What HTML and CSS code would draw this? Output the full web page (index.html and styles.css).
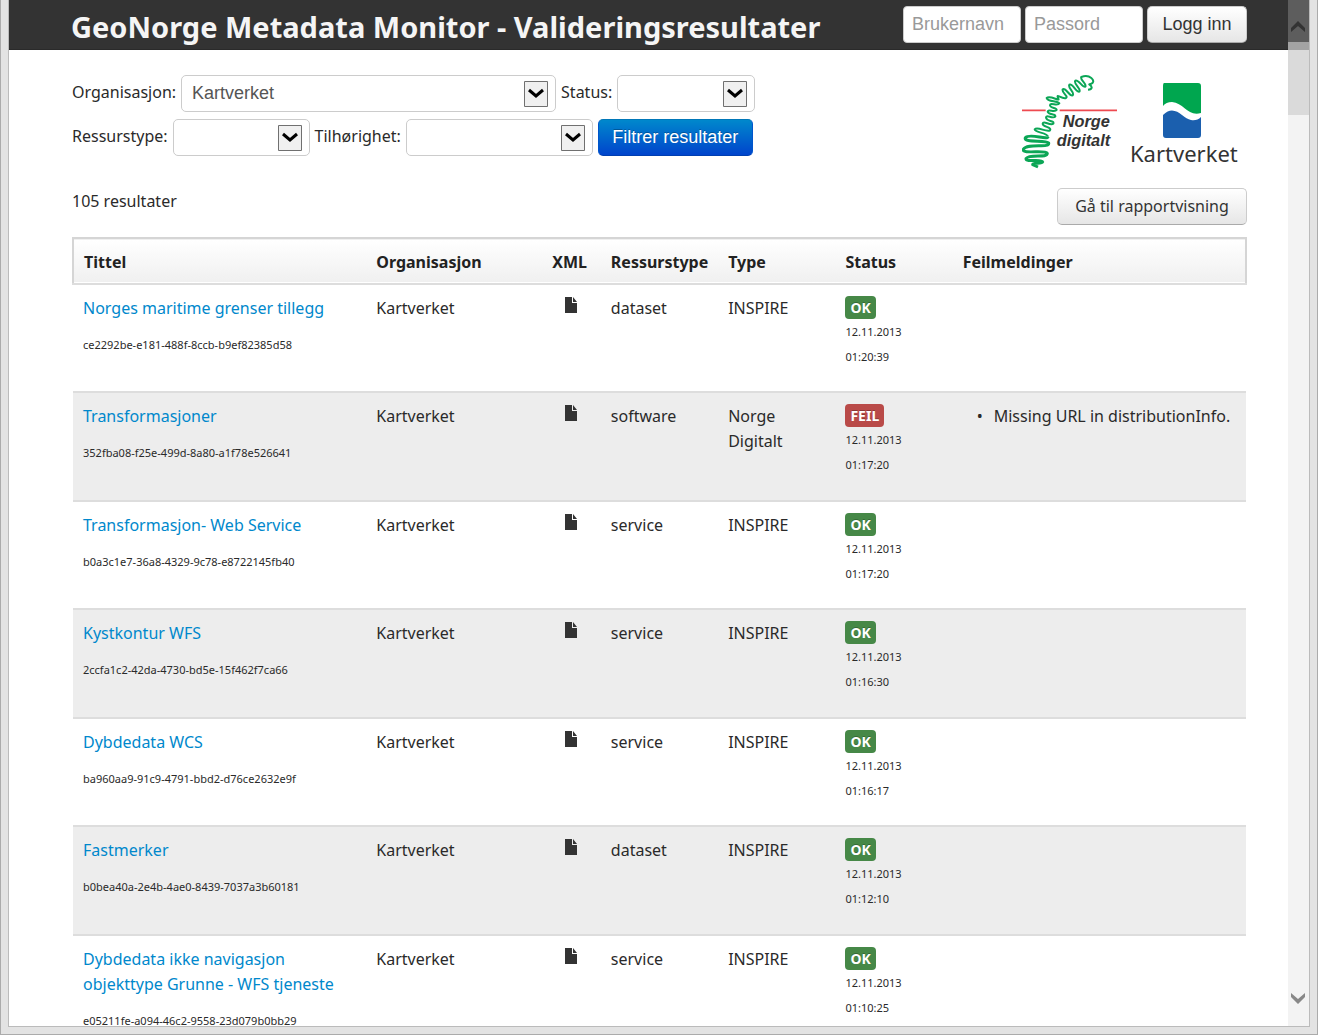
FILE: index.html
```html
<!DOCTYPE html>
<html lang="no">
<head>
<meta charset="utf-8">
<title>GeoNorge Metadata Monitor</title>
<link rel="stylesheet" href="styles.css">
</head>
<body>
<div class="window">
  <div class="page">
    <header class="navbar">
      <div class="navbar-inner">
        <h1 class="brand">GeoNorge Metadata Monitor - Valideringsresultater</h1>
        <form class="login">
          <input class="login-input" type="text" placeholder="Brukernavn" aria-label="Brukernavn">
          <input class="login-input" type="password" placeholder="Passord" aria-label="Passord">
          <button class="btn btn-login" type="button">Logg inn</button>
        </form>
      </div>
    </header>
    <main class="container">
      <div class="top">
        <form class="filters">
          <div class="filter-row">
            <label for="org">Organisasjon:</label>
            <span class="select select-org"><select id="org"><option>Kartverket</option></select><svg class="drop" viewBox="0 0 24 26"><path class="drop-box" d="M.5.500h23v25H.5z"/><path class="drop-arrow" d="M5 9l7 6 7-6"/></svg></span>
            <label for="status">Status:</label>
            <span class="select select-status"><select id="status"><option></option></select><svg class="drop" viewBox="0 0 24 26"><path class="drop-box" d="M.5.500h23v25H.5z"/><path class="drop-arrow" d="M5 9l7 6 7-6"/></svg></span>
          </div>
          <div class="filter-row">
            <label for="type">Ressurstype:</label>
            <span class="select select-type"><select id="type"><option></option></select><svg class="drop" viewBox="0 0 24 26"><path class="drop-box" d="M.5.500h23v25H.5z"/><path class="drop-arrow" d="M5 9l7 6 7-6"/></svg></span>
            <label for="belongs">Tilhørighet:</label>
            <span class="select select-belongs"><select id="belongs"><option></option></select><svg class="drop" viewBox="0 0 24 26"><path class="drop-box" d="M.5.500h23v25H.5z"/><path class="drop-arrow" d="M5 9l7 6 7-6"/></svg></span>
            <button class="btn btn-primary" type="button">Filtrer resultater</button>
          </div>
        </form>
        <div class="logos">
          <svg class="logo-norge" viewBox="0 0 288 288" role="img" aria-label="Norge digitalt">
            <path class="red-line" d="M0 109h71M113 109h172"/>
            <path class="coast thin" d="M198 47C212 46 212 38 202 31C214 30 218 20 208 12C198 4 186 6 178 9C172 16 196 30 190 38C182 42 170 16 160 20C152 28 180 46 172 53C162 56 152 26 142 32C136 42 160 56 152 64C142 68 132 40 122 46C118 56 140 66 132 72C118 76 102 56 108 72C118 86 84 62 74 72C76 84 106 80 112 88C108 98 84 84 84 94C86 104 104 100 104 108C98 116 78 104 77 113C80 124 102 118 100 128C92 136 72 120 72 131C74 144 98 138 94 149C84 156 64 138 62 149C62 160 90 158 84 169C74 176 46 156 38 166C38 176 76 176 78 188"/>
            <path class="coast" d="M78 188C76 200 24 176 10 191C4 208 72 196 80 207C84 224 16 206 4 226C0 242 70 226 76 238C76 254 22 238 12 254C12 266 60 254 62 264C60 272 32 264 32 272L48 279"/>
            <text class="norge-text" x="122" y="158">Norge</text>
            <text class="norge-text" x="104" y="215">digitalt</text>
          </svg>
          <svg class="logo-kart" viewBox="0 0 108 84" role="img" aria-label="Kartverket">
            <path fill="#00a64f" d="M34 0h34q3 0 3 3v27C58 34 54 20 42 19Q36 19 33 23V3q0-3 1-3z"/>
            <path fill="#1b5fae" d="M33 32C45 20 53 36 61 37Q67 38 71 34V52q0 3-3 3H36q-3 0-3-3z"/>
            <text class="kart-text" x="0" y="79">Kartverket</text>
          </svg>
        </div>
      </div>
      <div class="summary">
        <p class="count">105 resultater</p>
        <a class="btn btn-report" href="#rapport">Gå til rapportvisning</a>
      </div>
      <table class="results">
        <colgroup><col class="c25"><col class="c15"><col class="c5"><col class="c10"><col class="c10"><col class="c10"><col class="c25"></colgroup>
        <thead><tr><th>Tittel</th><th>Organisasjon</th><th>XML</th><th>Ressurstype</th><th>Type</th><th>Status</th><th>Feilmeldinger</th></tr></thead>
        <tbody>
          <tr><td><a href="#1">Norges maritime grenser tillegg</a><p class="uuid">ce2292be-e181-488f-8ccb-b9ef82385d58</p></td><td>Kartverket</td><td class="xml"><a href="#x1" aria-label="XML"><svg class="file" viewBox="0 0 12 16"><path d="M0 0h7v6h5v10H0zM8 0l4 5H8z"/></svg></a></td><td>dataset</td><td>INSPIRE</td><td><span class="label ok">OK</span><p class="time">12.11.2013<br>01:20:39</p></td><td></td></tr>
          <tr><td><a href="#2">Transformasjoner</a><p class="uuid">352fba08-f25e-499d-8a80-a1f78e526641</p></td><td>Kartverket</td><td class="xml"><a href="#x2" aria-label="XML"><svg class="file" viewBox="0 0 12 16"><path d="M0 0h7v6h5v10H0zM8 0l4 5H8z"/></svg></a></td><td>software</td><td>Norge Digitalt</td><td><span class="label feil">FEIL</span><p class="time">12.11.2013<br>01:17:20</p></td><td><ul class="errors"><li>Missing URL in distributionInfo.</li></ul></td></tr>
          <tr><td><a href="#3">Transformasjon- Web Service</a><p class="uuid">b0a3c1e7-36a8-4329-9c78-e8722145fb40</p></td><td>Kartverket</td><td class="xml"><a href="#x3" aria-label="XML"><svg class="file" viewBox="0 0 12 16"><path d="M0 0h7v6h5v10H0zM8 0l4 5H8z"/></svg></a></td><td>service</td><td>INSPIRE</td><td><span class="label ok">OK</span><p class="time">12.11.2013<br>01:17:20</p></td><td></td></tr>
          <tr><td><a href="#4">Kystkontur WFS</a><p class="uuid">2ccfa1c2-42da-4730-bd5e-15f462f7ca66</p></td><td>Kartverket</td><td class="xml"><a href="#x4" aria-label="XML"><svg class="file" viewBox="0 0 12 16"><path d="M0 0h7v6h5v10H0zM8 0l4 5H8z"/></svg></a></td><td>service</td><td>INSPIRE</td><td><span class="label ok">OK</span><p class="time">12.11.2013<br>01:16:30</p></td><td></td></tr>
          <tr><td><a href="#5">Dybdedata WCS</a><p class="uuid">ba960aa9-91c9-4791-bbd2-d76ce2632e9f</p></td><td>Kartverket</td><td class="xml"><a href="#x5" aria-label="XML"><svg class="file" viewBox="0 0 12 16"><path d="M0 0h7v6h5v10H0zM8 0l4 5H8z"/></svg></a></td><td>service</td><td>INSPIRE</td><td><span class="label ok">OK</span><p class="time">12.11.2013<br>01:16:17</p></td><td></td></tr>
          <tr><td><a href="#6">Fastmerker</a><p class="uuid">b0bea40a-2e4b-4ae0-8439-7037a3b60181</p></td><td>Kartverket</td><td class="xml"><a href="#x6" aria-label="XML"><svg class="file" viewBox="0 0 12 16"><path d="M0 0h7v6h5v10H0zM8 0l4 5H8z"/></svg></a></td><td>dataset</td><td>INSPIRE</td><td><span class="label ok">OK</span><p class="time">12.11.2013<br>01:12:10</p></td><td></td></tr>
          <tr><td><a href="#7">Dybdedata ikke navigasjon objekttype Grunne - WFS tjeneste</a><p class="uuid">e05211fe-a094-46c2-9558-23d079b0bb29</p></td><td>Kartverket</td><td class="xml"><a href="#x7" aria-label="XML"><svg class="file" viewBox="0 0 12 16"><path d="M0 0h7v6h5v10H0zM8 0l4 5H8z"/></svg></a></td><td>service</td><td>INSPIRE</td><td><span class="label ok">OK</span><p class="time">12.11.2013<br>01:10:25</p></td><td></td></tr>
        </tbody>
      </table>
    </main>
  </div>
  <div class="scrollbar" aria-hidden="true">
    <div class="scroll-up"><svg viewBox="0 0 16 12"><path d="M1 11V7l7-7 7 7v4L8 5z" fill="#333"/></svg></div>
    <div class="thumb"></div>
    <div class="scroll-down"><svg viewBox="0 0 16 12"><path d="M1 0v4l7 7 7-7V0L8 6z" fill="#888"/></svg></div>
  </div>
</div>
</body>
</html>
```
FILE: styles.css
```css
* { box-sizing: border-box; }
body {
  margin: 0;
  height: 100vh;
  overflow: hidden;
  padding: 0 7px 7px;
  background: #e3e3e3;
  border: 1px solid #ababab;
  border-top: 0;
  font: 16px/25px "Noto Sans", "Open Sans", sans-serif;
  color: #2a2a2a;
}
.window {
  display: flex;
  height: 100%;
  background: #fff;
  border: 1px solid #bbb;
  border-top: 0;
}
.page { flex: 1; min-width: 0; overflow: hidden; }
.navbar { background: #333; border-bottom: 1px solid #2a2a2a; }
.navbar-inner {
  display: flex;
  justify-content: space-between;
  align-items: flex-start;
  height: 49px;
  padding: 6px 41px 0 62px;
}
.brand { margin: 1px 0 0; font-size: 29px; line-height: 40px; color: #f5f5f5; white-space: nowrap; }
.login { display: flex; gap: 4px; }
.login-input {
  width: 118px;
  height: 37px;
  padding: 0 8px;
  border: 1px solid #ccc;
  border-radius: 4px;
  background: #fff;
  font: 18px "Liberation Sans", sans-serif;
}
.login-input::placeholder { color: #999; }
.btn {
  display: inline-block;
  height: 37px;
  padding: 0 15px;
  border: 1px solid #bbb;
  border-color: #ccc #ccc #aaa;
  border-radius: 5px;
  background: linear-gradient(#fff, #e6e6e6);
  color: #333;
  font: 18px "Liberation Sans", sans-serif;
  text-decoration: none;
  white-space: nowrap;
}
.btn-login { width: 100px; padding: 0; }
.btn-report { width: 190px; padding: 0; text-align: center; font: 16px/35px "Noto Sans", sans-serif; }
.btn-primary {
  width: 155px;
  padding: 0;
  border-color: #0077b8 #0055cc #003fb0;
  background: linear-gradient(#0088cc, #0044cc);
  color: #fff;
  text-shadow: 0 -1px 0 rgba(0, 0, 0, .25);
}
.container { padding: 24px 41px 0 63px; }
.top { display: flex; justify-content: space-between; height: 114px; }
.filters { display: flex; flex-direction: column; gap: 7px; padding-top: 1px; }
.filter-row { display: flex; gap: 5px; }
.filter-row label { line-height: 34px; }
.select { display: grid; height: 37px; }
.select select, .select .drop { grid-area: 1 / 1; }
.select select {
  width: 100%;
  height: 37px;
  padding: 0 10px;
  appearance: none;
  border: 1px solid #ccc;
  border-radius: 5px;
  background: #fff;
  color: #555;
  font: 18px/35px "Liberation Sans", sans-serif;
}
.drop { width: 24px; height: 26px; margin-right: 8px; justify-self: end; align-self: center; pointer-events: none; }
.drop-box { fill: #f0f0f0; stroke: #707070; }
.drop-arrow { fill: none; stroke: #000; stroke-width: 3; }
.select-org { width: 375px; }
.select-status { width: 138px; }
.select-type { width: 137px; }
.select-belongs { width: 187px; }
.logos { display: flex; gap: 12px; padding-right: 9px; }
.logo-norge { width: 96px; height: 96px; }
.logo-kart { width: 108px; height: 84px; margin-top: 9px; overflow: visible; }
.red-line { stroke: #ee4a50; stroke-width: 5; }
.coast { fill: none; stroke: #0ca656; stroke-width: 9; stroke-linejoin: round; }
.thin { stroke-width: 6; }
.norge-text { font: italic bold 49px "Liberation Sans Narrow", "Liberation Sans", sans-serif; fill: #333; }
.kart-text { font: 22px "Noto Sans", sans-serif; fill: #333; }
.summary { display: flex; justify-content: space-between; height: 49px; }
.count { margin: 1px 0 0; }
.results { width: 100%; table-layout: fixed; border-collapse: collapse; }
.c25 { width: 25%; }
.c15 { width: 15%; }
.c10 { width: 10%; }
.c5 { width: 5%; }
thead { border: 2px solid #d5d5d5; background: linear-gradient(#fff, #f0f0f0); }
th { height: 46px; padding: 2px 0 0 10px; text-align: left; white-space: nowrap; color: #222; }
tbody tr { height: 108px; border-top: 2px solid #ddd; }
tbody tr:nth-child(even) { height: 109px; background: #ededed; }
td { padding: 11px 10px 0; vertical-align: top; }
a { color: #0088cc; text-decoration: none; }
.uuid, .time { margin: 0; font-size: 11px; }
.uuid { margin-top: 11px; }
.xml { text-align: center; padding: 0; }
.xml a { display: block; padding: 12px 2px 0 0; }
.file { display: block; width: 12px; height: 16px; margin: 0 auto; fill: #333; }
.label {
  display: block;
  width: fit-content;
  height: 23px;
  padding: 0 5px;
  border-radius: 4px;
  color: #fff;
  font-size: 14px;
  line-height: 24px;
  font-weight: bold;
  text-shadow: 0 -1px 0 rgba(0, 0, 0, .25);
}
.ok { background: #468847; }
.feil { background: #b94a48; }
.errors { margin: 0; padding: 0 0 0 31px; list-style: none; white-space: nowrap; }
.errors li::before { content: "•"; float: left; margin-left: -17px; }
.scrollbar { display: flex; flex-direction: column; width: 21px; background: #f3f3f3; }
.scroll-up { height: 42px; padding: 21px 0 0 2px; background: #5d5d5d; }
.scrollbar svg { display: block; width: 16px; height: 12px; }
.thumb { height: 73px; background: linear-gradient(#a3a3a3 8px, #dadada 8px); }
.scroll-down { margin-top: auto; padding: 0 0 21px 2px; }
```
